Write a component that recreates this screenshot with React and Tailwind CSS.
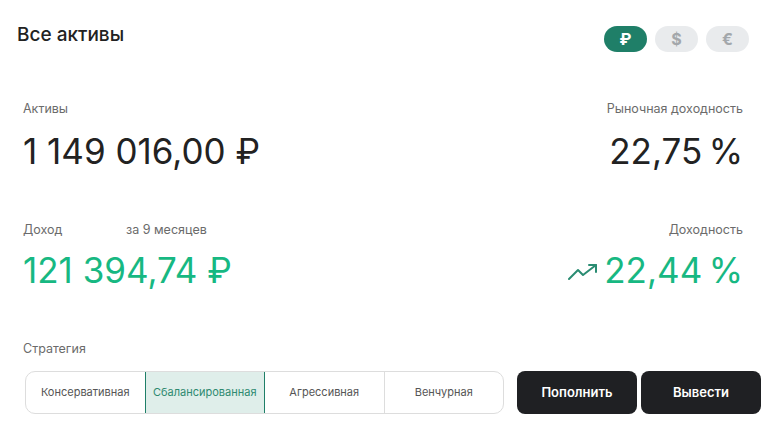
export default function App() {
  const segs = ["Консервативная", "Сбалансированная", "Агрессивная", "Венчурная"];
  return (
    <div className="w-[772px] h-[438px] bg-white text-[#222222] overflow-hidden" style={{ fontFamily: "Inter, 'Noto Sans', sans-serif" }}>
      <div className="flex justify-between items-start pl-[17px] pr-[23px] pt-[23px]">
        <div className="text-[19px] leading-[24px] font-medium text-[#222]">Все активы</div>
        <div className="flex gap-[8px] mt-[3px]">
          <div className="w-[43px] h-[26px] rounded-full bg-[#1f7f68] flex items-center justify-center text-white text-[16px] font-bold">₽</div>
          <div className="w-[43px] h-[26px] rounded-full bg-[#e9ebed] flex items-center justify-center text-[#a3a7ab] text-[16px] font-bold">$</div>
          <div className="w-[43px] h-[26px] rounded-full bg-[#e9ebed] flex items-center justify-center text-[#a3a7ab] text-[16px] font-bold">€</div>
        </div>
      </div>

      <div className="pl-[23px] pr-[29px] mt-[49px]">
        <div className="flex justify-between text-[12.5px] leading-[16px] text-[#6b6b6b]">
          <span>Активы</span>
          <span>Рыночная доходность</span>
        </div>
        <div className="flex justify-between mt-[14px] text-[35px] leading-[40px] text-[#222]">
          <span>1 149 016,00 ₽</span>
          <span>22,75{"\u202F"}%</span>
        </div>

        <div className="flex justify-between mt-[51px] text-[12.5px] leading-[16px] text-[#6b6b6b]">
          <div className="flex">
            <span className="w-[103px]">Доход</span>
            <span>за 9 месяцев</span>
          </div>
          <span>Доходность</span>
        </div>
        <div className="flex justify-between items-center mt-[12px] text-[35px] leading-[40px] text-[#17b882]">
          <span>121 394,74 ₽</span>
          <div className="flex items-center gap-[6px]">
            <svg width="30" height="18" viewBox="0 0 30 18" fill="none" stroke="#2a8c72" strokeWidth="2" strokeLinecap="round" strokeLinejoin="round" className="mt-[4px]">
              <polyline points="1,16 10,7 15,12 28,2" />
              <polyline points="21,2 28,2 28,9" />
            </svg>
            <span>22,44{"\u202F"}%</span>
          </div>
        </div>

        <div className="mt-[51px] text-[12.5px] leading-[16px] text-[#6b6b6b]">Стратегия</div>
      </div>

      <div className="flex items-center mt-[14px] pl-[25px]">
        <div className="flex w-[479px] h-[43px] rounded-[10px] border border-[#dddddd] overflow-hidden">
          {segs.map((s, i) => (
            <div
              key={s}
              className={
                i === 1
                  ? "flex-1 flex items-center justify-center text-[11px] text-[#2e8a70] bg-[#dfeeea] border border-[#1f7f68] -my-px"
                  : i === 3
                  ? "flex-1 flex items-center justify-center text-[11px] text-[#555] border-l border-[#dddddd]"
                  : "flex-1 flex items-center justify-center text-[11px] text-[#555]"
              }
            >
              {s}
            </div>
          ))}
        </div>
        <button className="ml-[13px] w-[120px] h-[43px] rounded-[8px] bg-[#1f2023] text-white text-[13px] font-semibold">Пополнить</button>
        <button className="ml-[4px] w-[120px] h-[43px] rounded-[8px] bg-[#1f2023] text-white text-[13px] font-semibold">Вывести</button>
      </div>
    </div>
  );
}
